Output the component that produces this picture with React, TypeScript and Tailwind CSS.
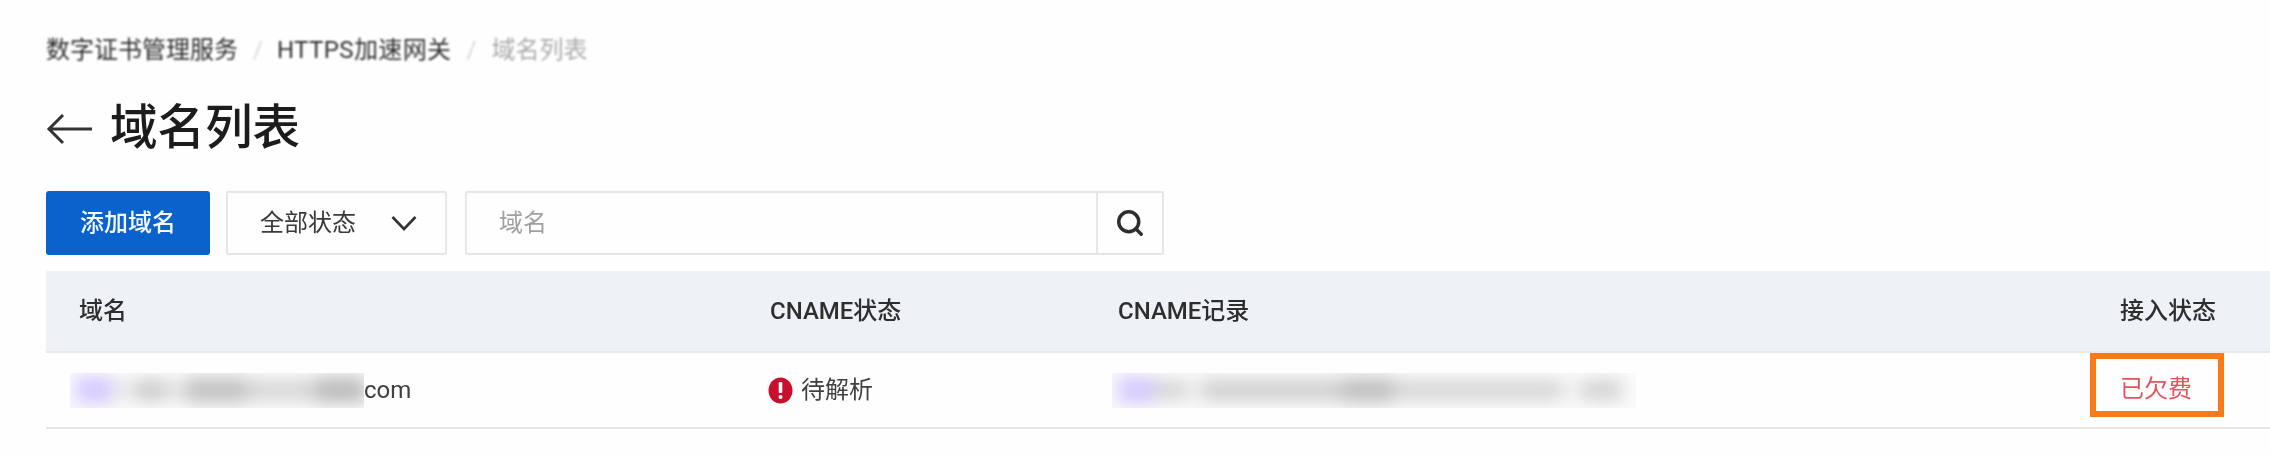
import { Search } from "lucide-react";

const FONT = "font-['Roboto','Noto_Sans_CJK_SC',sans-serif]";

const BlurredValue = ({ className, blobs }: { className: string; blobs: string[] }) => (
  <div className={`flex h-[35px] items-center overflow-hidden bg-[#fbfbfb] ${className}`}>
    <div className="flex h-full w-full items-center blur-[9px]">
      <div className="ml-[6px] h-[26px] w-[36px] shrink-0 bg-[#d4c6ff]" />
      {blobs.map((blob, i) => (
        <div key={i} className={blob} />
      ))}
    </div>
  </div>
);

const App = () => {
  return (
    <div className={`h-[454px] w-[2270px] overflow-hidden bg-[#fefefe] pl-[46px] pt-[32px] text-[24px] ${FONT}`}>
      <nav className="flex h-[36px] items-center text-[#2e2e2e] blur-[0.8px]">
        <span>数字证书管理服务</span>
        <span className="ml-[15px] mr-[14px] text-[#d9d9d9]">/</span>
        <span className="tracking-[0.4px]">HTTPS加速网关</span>
        <span className="ml-[15px] mr-[15px] text-[#d9d9d9]">/</span>
        <span className="text-[#ababab]">域名列表</span>
      </nav>

      <div className="mt-[31px] flex h-[60px] items-center gap-[17px] text-[#1c1c1c] blur-[0.7px]">
        <svg width="47" height="32" viewBox="0 0 47 32" fill="none" stroke="#333" strokeWidth="3">
          <path d="M2 16H46M17 2 3 16l14 14" />
        </svg>
        <h1 className="text-[47.5px] leading-none font-medium">域名列表</h1>
      </div>

      <div className="mt-[32px] flex h-[64px] gap-[16px] blur-[0.6px]">
        <button className="h-full w-[164px] rounded-[3px] bg-[#0a62cc] font-medium text-[#f4f8fd]">添加域名</button>
        <div className="flex h-full w-[221px] items-center rounded-[2px] border-2 border-[#e6e6e6] pl-[32px] text-[#3a3a3a]">
          <span>全部状态</span>
          <svg className="ml-[35px]" width="26" height="16" viewBox="0 0 26 16" fill="none" stroke="#333" strokeWidth="2.6">
            <path d="M1.5 2 13 14 24.5 2" />
          </svg>
        </div>
        <div className="ml-[2px] flex h-full w-[699px] rounded-[2px] border-2 border-[#e6e6e6]">
          <div className="flex flex-1 items-center border-r-2 border-[#e6e6e6] pl-[32px] text-[#a0a0a0]">域名</div>
          <div className="flex w-[64px] items-center justify-center">
            <Search size={30} color="#2e2e2e" strokeWidth={2.8} />
          </div>
        </div>
      </div>

      <div className="mt-[16px] grid h-[82px] grid-cols-[724px_348px_1fr_96px] items-center border-b-2 border-[#e8e8e8] bg-[#eef1f6] pr-[54px] font-medium text-[#2e2e2e]">
        <div className="pl-[33px] blur-[0.6px]">域名</div>
        <div className="blur-[0.6px]">CNAME状态</div>
        <div className="blur-[0.6px]">CNAME记录</div>
        <div className="blur-[0.6px]">接入状态</div>
      </div>

      <div className="grid h-[76px] grid-cols-[724px_348px_1fr_96px] items-center border-b-2 border-[#e6e6e6] pr-[54px] text-[#404040]">
        <div className="flex items-center pl-[24px]">
          <BlurredValue
            className="w-[294px]"
            blobs={[
              "h-[14px] w-[24px] shrink-0 bg-[#e4e4e4]",
              "h-[18px] w-[30px] shrink-0 bg-[#c2c2c2]",
              "h-[14px] w-[20px] shrink-0 bg-[#dedede]",
              "h-[24px] w-[60px] shrink-0 bg-[#bebebe]",
              "h-[18px] w-[70px] shrink-0 bg-[#d0d0d0]",
              "h-[24px] w-[50px] shrink-0 bg-[#b6b6b6]",
            ]}
          />
          <span className="blur-[0.7px]">com</span>
        </div>
        <div className="-ml-[2px] flex items-center gap-[8px] blur-[0.7px]">
          <svg width="25" height="27" viewBox="0 0 25 27">
            <ellipse cx="12.5" cy="13.5" rx="12" ry="13" fill="#c8102e" />
            <rect x="10.7" y="5" width="3.6" height="11" rx="1.2" fill="#fff" />
            <circle cx="12.5" cy="20" r="2" fill="#fff" />
          </svg>
          <span>待解析</span>
        </div>
        <BlurredValue
          className="-ml-[6px] w-[524px]"
          blobs={[
            "h-[16px] w-[34px] shrink-0 bg-[#cccccc]",
            "h-[10px] w-[14px] shrink-0 bg-[#eeeeee]",
            "h-[20px] w-[140px] shrink-0 bg-[#cccccc]",
            "h-[24px] w-[50px] shrink-0 bg-[#bcbcbc]",
            "h-[18px] w-[170px] shrink-0 bg-[#d0d0d0]",
            "h-[12px] w-[20px] shrink-0 bg-[#eeeeee]",
            "h-[18px] w-[40px] shrink-0 bg-[#cccccc]",
          ]}
        />
        <div className="relative">
          <span className="relative -top-[1px] whitespace-nowrap text-[#e5525c] blur-[0.7px]">已欠费</span>
          <div className="absolute -left-[30px] -top-[19px] h-[64px] w-[134px] border-[6px] border-[#fb7a18]" />
        </div>
      </div>
    </div>
  );
};

export default App;
